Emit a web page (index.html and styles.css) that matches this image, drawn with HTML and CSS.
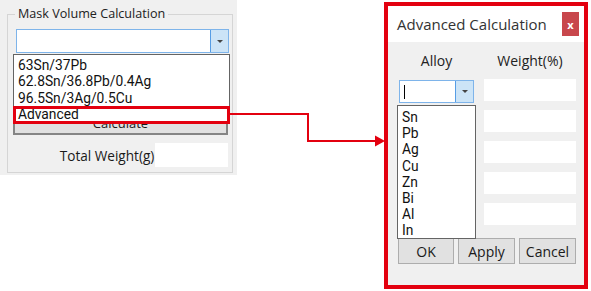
FILE: index.html
```html
<!DOCTYPE html>
<html lang="en">
<head>
  <meta charset="UTF-8" />
  <title>Mask Volume Calculation</title>
  <link rel="stylesheet" href="styles.css">
</head>
<body>

  <!-- main window part -->
  <div class="panel">
    <fieldset class="group">
      <legend>Mask Volume Calculation</legend>
      <div class="combo focus">
        <div class="combo-text"></div>
        <div class="combo-btn"><span class="tri"></span></div>
      </div>
      <button class="btn calc">Calculate</button>
      <div class="total-row">
        <span class="total-label">Total Weight(g)</span>
        <div class="field total-field"></div>
      </div>
    </fieldset>

    <ul class="list mix-list">
      <li>63Sn/37Pb</li>
      <li>62.8Sn/36.8Pb/0.4Ag</li>
      <li>96.5Sn/3Ag/0.5Cu</li>
      <li>Advanced</li>
    </ul>
    <div class="mark"></div>
  </div>

  <!-- advanced dialog -->
  <div class="dialog">
    <div class="titlebar">
      <span class="title">Advanced Calculation</span>
      <span class="close">x</span>
    </div>
    <div class="dlg-body">
      <div class="grid">
        <div class="head">Alloy</div>
        <div class="head">Weight(%)</div>
        <div class="combo small focus">
          <div class="combo-text"><span class="caret"></span></div>
          <div class="combo-btn"><span class="tri"></span></div>
        </div>
        <div class="field"></div>
        <div></div><div class="field"></div>
        <div></div><div class="field"></div>
        <div></div><div class="field"></div>
        <div></div><div class="field"></div>
      </div>
      <div class="buttons">
        <button class="btn">OK</button>
        <button class="btn">Apply</button>
        <button class="btn">Cancel</button>
      </div>
    </div>

    <ul class="list alloy-list">
      <li>Sn</li>
      <li>Pb</li>
      <li>Ag</li>
      <li>Cu</li>
      <li>Zn</li>
      <li>Bi</li>
      <li>Al</li>
      <li>In</li>
    </ul>
  </div>

  <!-- callout arrow -->
  <svg class="arrow" width="591" height="291" viewBox="0 0 591 291">
    <polyline points="230,114 308,114 308,141 377,141" fill="none" stroke="#e3000f" stroke-width="2" />
    <polygon points="375,135.5 385,141 375,146.5" fill="#e3000f" />
  </svg>

</body>
</html>
```

FILE: styles.css
```css
body {
  margin: 0;
  width: 591px;
  height: 291px;
  background: #fff;
  font-family: "Open Sans", "Noto Sans", sans-serif;
  font-size: 13px;
  color: #1a1a1a;
  display: flex;
  align-items: flex-start;
  position: relative;
  overflow: hidden;
}

.panel {
  position: relative;
  width: 237px;
  height: 175px;
  background: #f0f0f0;
  padding: 6px 4px 0 7px;
  box-sizing: border-box;
}

.group {
  margin: 0;
  padding: 0 0 5px 0;
  width: 226px;
  border: 1px solid #d5d5d5;
  box-sizing: border-box;
  display: flex;
  flex-direction: column;
  align-items: flex-start;
}

.group legend {
  margin-left: 7px;
  padding: 0 3px;
  line-height: 16px;
  font-size: 12.6px;
  color: #222;
}

.combo {
  display: flex;
  width: 213px;
  height: 24px;
  margin: 7px 0 0 8px;
  border: 1px solid #7eb4ea;
  background: #fff;
  box-sizing: border-box;
}

.combo-text {
  flex: 1;
  display: flex;
  align-items: center;
  padding-left: 4px;
}

.combo-btn {
  width: 17px;
  background: #cce4f7;
  border-left: 1px solid #569de5;
  display: flex;
  align-items: center;
  justify-content: center;
}

.tri {
  width: 0;
  height: 0;
  border-left: 3px solid transparent;
  border-right: 3px solid transparent;
  border-top: 3px solid #444;
}

.caret {
  width: 1px;
  height: 14px;
  background: #000;
}

.btn {
  font-family: inherit;
  font-size: 13px;
  color: #1a1a1a;
  background: #e1e1e1;
  border: 1px solid #adadad;
  padding: 0;
  box-sizing: border-box;
}

.calc {
  width: 215px;
  height: 24px;
  margin: 58px 0 0 5px;
  border: 2px solid #858585;
}

.total-row {
  display: flex;
  align-items: center;
  margin-top: 8px;
  width: 220px;
}

.total-label {
  width: 147px;
  text-align: right;
  padding-right: 1px;
  font-size: 13.6px;
}

.field {
  height: 22px;
  background: #fff;
}

.total-field {
  width: 73px;
  height: 24px;
}

.list {
  position: absolute;
  margin: 0;
  padding: 2px 0 0 4px;
  list-style: none;
  background: #fff;
  border: 1px solid #646464;
  box-sizing: border-box;
  font-family: Roboto, "Open Sans", sans-serif;
  line-height: 16.3px;
  font-size: 13.8px;
  color: #111;
}

.mix-list {
  left: 13px;
  top: 54px;
  width: 217px;
  height: 70px;
}

.mark {
  position: absolute;
  left: 13px;
  top: 106px;
  width: 217px;
  height: 18px;
  border: 3px solid #e3000f;
  box-sizing: border-box;
}

.dialog {
  position: relative;
  margin: 2px 0 0 147px;
  width: 204px;
  height: 287px;
  border: 4px solid #e3000f;
  box-sizing: border-box;
  background: #f0f0f0;
}

.titlebar {
  height: 36px;
  background: #fff;
  display: flex;
  align-items: center;
  justify-content: space-between;
  padding: 0 5px 0 9px;
}

.title {
  font-size: 15px;
  color: #333;
}

.close {
  width: 17px;
  height: 24px;
  background: #c8474c;
  color: #fff;
  font-size: 11px;
  font-weight: bold;
  display: flex;
  align-items: center;
  justify-content: center;
}

.dlg-body {
  padding: 10px 0 0 11px;
}

.grid {
  display: grid;
  grid-template-columns: 75px 92px;
  grid-auto-rows: 22px;
  column-gap: 10px;
  row-gap: 9px;
  grid-template-rows: 18px;
}

.grid .head {
  text-align: center;
  font-size: 14px;
  line-height: 18px;
  color: #222;
}

.combo.small {
  width: 75px;
  height: 23px;
  margin: 1px 0 0 0;
}

.buttons {
  display: flex;
  gap: 4px;
  margin: 13px 0 0 -1px;
}

.buttons .btn {
  width: 57px;
  height: 26px;
  font-size: 14px;
}

.buttons .btn:first-child {
  width: 56px;
}

.alloy-list {
  left: 9px;
  top: 99px;
  width: 79px;
  height: 134px;
  padding: 3px 0 0 4px;
  line-height: 16.2px;
}

.arrow {
  position: absolute;
  left: 0;
  top: 0;
  pointer-events: none;
}
```
